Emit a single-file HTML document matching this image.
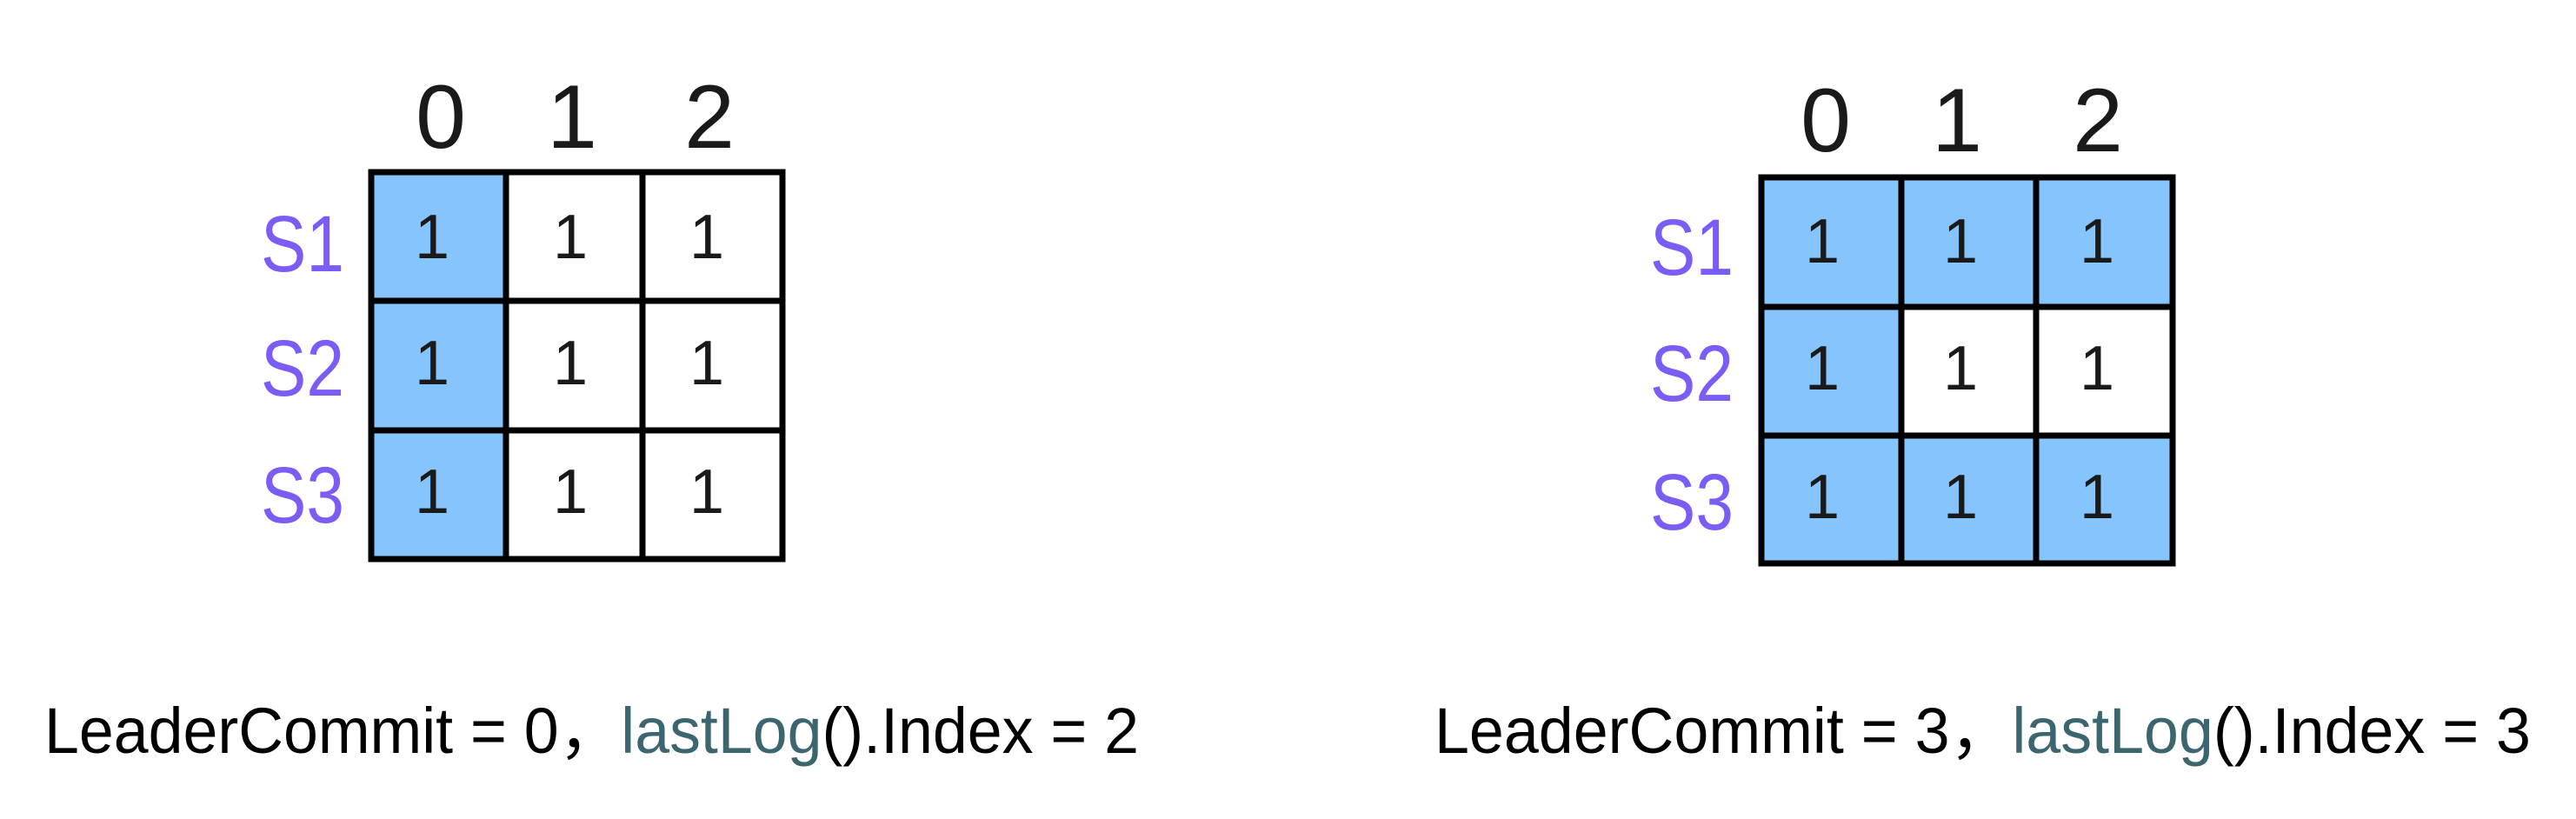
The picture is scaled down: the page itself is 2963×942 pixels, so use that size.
<!DOCTYPE html>
<html><head><meta charset="utf-8"><style>html,body{margin:0;padding:0;background:#fff;width:2963px;height:942px;overflow:hidden}</style></head>
<body>
<svg width="2963" height="942" viewBox="0 0 2963 942" xmlns="http://www.w3.org/2000/svg" font-family="Liberation Sans, sans-serif">
<rect width="2963" height="942" fill="#fff"/>
<!-- left grid -->
<g>
<rect x="427" y="198" width="155" height="445" fill="#85C4FC"/>
<g stroke="#000" stroke-width="7" fill="none">
<rect x="427" y="198" width="473" height="445"/>
<line x1="582" y1="198" x2="582" y2="643"/><line x1="739" y1="198" x2="739" y2="643"/>
<line x1="427" y1="346" x2="900" y2="346"/><line x1="427" y1="495" x2="900" y2="495"/>
</g>
<g font-size="104" fill="#1a1a1a" text-anchor="middle"><text x="507" y="170">0</text><text x="658" y="170">1</text><text x="816" y="170">2</text></g>
<g font-size="92" fill="#7B5CF5"><text x="300" y="312" textLength="96" lengthAdjust="spacingAndGlyphs">S1</text><text x="300" y="455" textLength="96" lengthAdjust="spacingAndGlyphs">S2</text><text x="300" y="601" textLength="96" lengthAdjust="spacingAndGlyphs">S3</text></g>
<g font-size="72" fill="#1a1a1a" text-anchor="middle">
<text x="497" y="297">1</text><text x="656" y="297">1</text><text x="813" y="297">1</text>
<text x="497" y="442">1</text><text x="656" y="442">1</text><text x="813" y="442">1</text>
<text x="497" y="590">1</text><text x="656" y="590">1</text><text x="813" y="590">1</text>
</g>
</g>
<!-- right grid -->
<g>
<rect x="2026" y="204" width="473" height="444" fill="#85C4FC"/>
<rect x="2187" y="353" width="312" height="148" fill="#fff"/>
<g stroke="#000" stroke-width="7" fill="none">
<rect x="2026" y="204" width="473" height="444"/>
<line x1="2187" y1="204" x2="2187" y2="648"/><line x1="2342" y1="204" x2="2342" y2="648"/>
<line x1="2026" y1="353" x2="2499" y2="353"/><line x1="2026" y1="501" x2="2499" y2="501"/>
</g>
<g font-size="104" fill="#1a1a1a" text-anchor="middle"><text x="2100" y="174">0</text><text x="2251" y="174">1</text><text x="2413" y="174">2</text></g>
<g font-size="92" fill="#7B5CF5"><text x="1898" y="316" textLength="96" lengthAdjust="spacingAndGlyphs">S1</text><text x="1898" y="461" textLength="96" lengthAdjust="spacingAndGlyphs">S2</text><text x="1898" y="609" textLength="96" lengthAdjust="spacingAndGlyphs">S3</text></g>
<g font-size="72" fill="#1a1a1a" text-anchor="middle">
<text x="2096" y="302">1</text><text x="2255" y="302">1</text><text x="2412" y="302">1</text>
<text x="2096" y="448">1</text><text x="2255" y="448">1</text><text x="2412" y="448">1</text>
<text x="2096" y="596">1</text><text x="2255" y="596">1</text><text x="2412" y="596">1</text>
</g>
</g>
<!-- captions -->
<text x="51" y="866" font-size="74" fill="#000" textLength="1259" lengthAdjust="spacingAndGlyphs">LeaderCommit = 0，<tspan fill="#3B6670">lastLog</tspan>().Index = 2</text>
<text x="1650" y="866" font-size="74" fill="#000" textLength="1261" lengthAdjust="spacingAndGlyphs">LeaderCommit = 3，<tspan fill="#3B6670">lastLog</tspan>().Index = 3</text>
</svg>
</body></html>
